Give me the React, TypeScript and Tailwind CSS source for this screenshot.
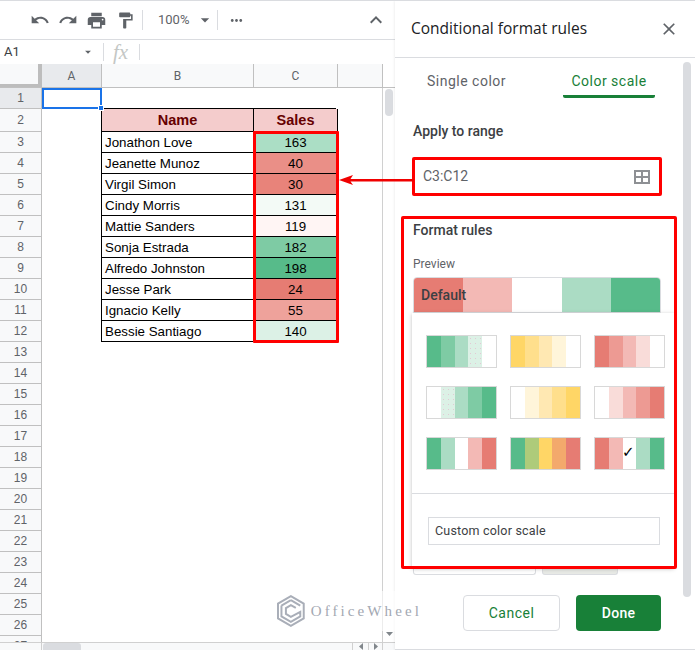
import { MdUndo, MdRedo, MdPrint, MdFormatPaint, MdMoreHoriz, MdExpandLess, MdClose, MdArrowDropDown } from "react-icons/md";

const dots = "bg-[radial-gradient(#e3c9d4_0.4px,transparent_0.6px)] bg-[length:5px_5px]";
const cellDots = "bg-[radial-gradient(#cfe3d8_0.5px,transparent_0.7px)] bg-[length:4px_4px]";

const PEOPLE = [
  { name: "Jonathon Love", sales: 163, bg: "bg-[#abdec5]" },
  { name: "Jeanette Munoz", sales: 40, bg: "bg-[#ea8f87]" },
  { name: "Virgil Simon", sales: 30, bg: "bg-[#e8837a]" },
  { name: "Cindy Morris", sales: 131, bg: `bg-[#f3faf6] ${cellDots}` },
  { name: "Mattie Sanders", sales: 119, bg: "bg-[#fff5f4]" },
  { name: "Sonja Estrada", sales: 182, bg: "bg-[#7ecba4]" },
  { name: "Alfredo Johnston", sales: 198, bg: "bg-[#57bb8a]" },
  { name: "Jesse Park", sales: 24, bg: "bg-[#e67c73]" },
  { name: "Ignacio Kelly", sales: 55, bg: "bg-[#eea29b]" },
  { name: "Bessie Santiago", sales: 140, bg: "bg-[#dcf1e6]" },
];

const SCALES = [
  ["bg-[#57bb8a]", "bg-[#7ecba4]", "bg-[#abdcc4]", `bg-[#dcf1e6] ${dots}`, "bg-white"],
  ["bg-[#ffd666]", "bg-[#ffdf8c]", "bg-[#ffe8b2]", "bg-[#fff5da]", "bg-white"],
  ["bg-[#e67c73]", "bg-[#ed9a93]", "bg-[#f3b9b5]", "bg-[#f9dcd9]", "bg-white"],
  ["bg-white", `bg-[#dcf1e6] ${dots}`, "bg-[#abdcc4]", "bg-[#7ecba4]", "bg-[#57bb8a]"],
  ["bg-white", "bg-[#fff5da]", "bg-[#ffe8b2]", "bg-[#ffdf8c]", "bg-[#ffd666]"],
  ["bg-white", "bg-[#f9dcd9]", "bg-[#f3b9b5]", "bg-[#ed9a93]", "bg-[#e67c73]"],
  ["bg-[#57bb8a]", "bg-[#abdcc4]", "bg-white", "bg-[#f3b9b5]", "bg-[#e67c73]"],
  ["bg-[#57bb8a]", "bg-[#aecb7a]", "bg-[#ffd666]", "bg-[#f3a96c]", "bg-[#e67c73]"],
  ["bg-[#e67c73]", "bg-[#f3b9b5]", "bg-white", "bg-[#abdcc4]", "bg-[#57bb8a]"],
];

function RowHead({ n, active }: { n: number; active?: boolean }) {
  return (
    <div className={`w-[42px] shrink-0 flex items-center justify-center border-r border-b border-[#c0c0c0] text-[12px] text-[#5f6368] ${active ? "bg-[#e8eaed]" : "bg-[#f8f9fa]"}`}>
      {n}
    </div>
  );
}

function Sheet() {
  const blank = Array.from({ length: 15 }, (_, i) => i + 13);
  return (
    <div className="flex-1 flex flex-col min-h-0 relative">
      <div className="flex h-[24px] shrink-0 text-[12px] text-[#5f6368] bg-[#f8f9fa] border-b border-[#c0c0c0]">
        <div className="w-[42px] shrink-0 border-r-[4px] border-b-[3px] border-[#bdbdbd]" />
        <div className="w-[60px] shrink-0 flex items-center justify-center bg-[#e8eaed] border-r border-[#c0c0c0]">A</div>
        <div className="w-[152px] shrink-0 flex items-center justify-center border-r border-[#c0c0c0]">B</div>
        <div className="w-[84px] shrink-0 flex items-center justify-center border-r border-[#c0c0c0]">C</div>
        <div className="flex-1 border-r border-[#c0c0c0]" />
        <div className="w-[12px] shrink-0 bg-white" />
      </div>

      <div className="flex-1 flex min-h-0">
        <div className="flex-1 overflow-hidden border-r border-[#d0d0d0] font-['Liberation_Sans',sans-serif]">
          <div className="flex h-[21px]">
            <RowHead n={1} active />
            <div className="w-[60px] shrink-0 relative border-2 border-[#1a73e8] -mr-px">
              <div className="absolute -right-[4px] -bottom-[4px] w-[6px] h-[6px] bg-[#1a73e8] border border-white" />
            </div>
            <div className="w-[151px] shrink-0 border-b border-black" />
            <div className="w-[84px] shrink-0 border-b border-black" />
          </div>

          <div className="flex h-[23px]">
            <RowHead n={2} />
            <div className="w-[59px] shrink-0" />
            <div className="w-[153px] shrink-0 flex items-center justify-center pt-[2px] bg-[#f4cccc] border-x border-b border-black text-[14.5px] font-bold text-[#660000]">Name</div>
            <div className="w-[84px] shrink-0 flex items-center justify-center pt-[2px] bg-[#f4cccc] border-r border-b border-black text-[14.5px] font-bold text-[#660000]">Sales</div>
          </div>

          {PEOPLE.map((p, i) => (
            <div key={p.name} className="flex h-[21px]">
              <RowHead n={i + 3} />
              <div className="w-[59px] shrink-0" />
              <div className="w-[153px] shrink-0 flex items-center pl-[3px] pt-[2px] bg-white border-x border-b border-black text-[13.33px] text-black">{p.name}</div>
              <div className={`w-[84px] shrink-0 flex items-center justify-center pt-[2px] border-r border-b border-black text-[13.33px] text-black ${p.bg}`}>{p.sales}</div>
            </div>
          ))}

          {blank.map((n) => (
            <div key={n} className="flex h-[21px]">
              <RowHead n={n} />
            </div>
          ))}
        </div>

        <div className="w-[12px] shrink-0 relative">
          <div className="ml-[2px] mt-[1px] w-[8px] h-[27px] rounded-full bg-[#dadce0]" />
          <svg className="absolute bottom-[6px] left-[3px]" width="7" height="4" viewBox="0 0 7 4">
            <path d="M0 0h7L3.500 4z" fill="#80868b" />
          </svg>
        </div>
      </div>

      <div className="h-[8px] shrink-0 flex bg-[#f8f9fa] border-t border-[#d0d0d0]">
        <div className="w-[42px] shrink-0 border-r border-[#d0d0d0]" />
        <div className="ml-px w-[38px] h-[7px] rounded-t-[3px] bg-[#dadce0]" />
        <div className="ml-auto w-[16px] flex items-center justify-center border-l border-[#d0d0d0]">
          <svg width="4" height="7" viewBox="0 0 4 7"><path d="M4 0v7L0 3.500z" fill="#80868b" /></svg>
        </div>
        <div className="w-[15px] flex items-center justify-center border-x border-[#d0d0d0]">
          <svg width="4" height="7" viewBox="0 0 4 7"><path d="M0 0v7l4-3.500z" fill="#80868b" /></svg>
        </div>
        <div className="w-[12px]" />
      </div>
    </div>
  );
}

function Panel() {
  return (
    <div className="w-[300px] shrink-0 flex flex-col relative bg-white shadow-[-1px_0_2px_rgba(0,0,0,0.06)] font-['Roboto',sans-serif]">
      <div className="h-[57px] shrink-0 flex items-center justify-between pl-[16px] pr-[16px] border-b border-[#dadce0]">
        <span className="text-[15.5px] font-medium text-[#202124] font-['Open_Sans',sans-serif] -mt-[1px]">Conditional format rules</span>
        <MdClose className="text-[20px] text-[#5f6368]" />
      </div>

      <div className="flex-1 flex min-h-0">
        <div className="w-[288px] shrink-0 pl-[18px] pr-[22px]">
          <div className="flex h-[40px] text-[14px] tracking-[0.5px]">
            <div className="w-[150px] flex items-center pl-[14px] pt-[7px] text-[#5f6368]">Single color</div>
            <div className="w-[92px] flex items-center justify-center pt-[9px] text-[#188038] border-b-[3px] border-[#188038] rounded-b-[2px]">Color scale</div>
          </div>

          <div className="mt-[23px] text-[14px] font-medium text-[#3c4043]">Apply to range</div>

          <div className="mt-[15px] -ml-[1px] w-[250px] h-[39px] flex items-center justify-between pl-[8px] pr-[9px] border-[3px] border-[#ff0000] rounded-[2px]">
            <span className="text-[14px] text-[#5f6368]">C3:C12</span>
            <svg width="16" height="14" viewBox="0 0 16 14" className="text-[#8e9094]">
              <path fill="currentColor" d="M0 0h16v14H0zM2 2v4h5V2zM9 2v4h5V2zM2 8v4h5V8zM9 8v4h5V8z" fillRule="evenodd" />
            </svg>
          </div>

          <div className="mt-[24px] text-[14px] font-medium text-[#3c4043]">Format rules</div>
          <div className="mt-[14px] text-[12px] text-[#5f6368]">Preview</div>

          <div className="mt-[4px] w-[248px] h-[36px] flex rounded-t-[4px] overflow-hidden border border-[#dadce0] relative">
            <div className="flex-1 bg-[#e67c73]" />
            <div className="flex-1 bg-[#f3b9b5]" />
            <div className="flex-1 bg-white" />
            <div className="flex-1 bg-[#abdcc4]" />
            <div className="flex-1 bg-[#57bb8a]" />
            <span className="absolute left-[7px] top-[7px] text-[14px] font-medium text-[#3c4043]">Default</span>
          </div>

          <div className="mt-[254px] flex gap-[6px]">
            <div className="w-[123px] h-[8px] border border-t-0 border-[#dadce0] rounded-b-[3px]" />
            <div className="w-[76px] h-[8px] bg-[#e8eae6] border border-t-0 border-[#dadce0] rounded-b-[3px]" />
          </div>

          <div className="mt-[20px] flex justify-end gap-[16px]">
            <button className="w-[97px] h-[36px] flex items-center justify-center bg-white border border-[#dadce0] rounded-[4px] text-[14px] text-[#188038] tracking-[0.5px]">Cancel</button>
            <button className="w-[85px] h-[36px] flex items-center justify-center bg-[#188038] rounded-[4px] text-[14px] font-medium text-white tracking-[0.3px]">Done</button>
          </div>
        </div>

        <div className="w-[8px] h-[535px] mt-[4px] rounded-full bg-[#dadce0]" />
      </div>

      <div className="h-px shrink-0 bg-[#dadce0]" />

      {/* color scale menu, lies over the form */}
      <div className="absolute left-[17px] top-[312px] w-[262px] h-[255px] bg-white shadow-[0_1px_4px_rgba(0,0,0,0.25)]">
        <div className="grid grid-cols-3 gap-x-[13px] gap-y-[18px] pl-[14px] pt-[22px] w-[253px]">
          {SCALES.map((s, i) => (
            <div key={i} className="w-[71px] h-[33px] flex border border-[#d8d8d8] relative">
              {s.map((c, j) => (
                <div key={j} className={`flex-1 ${c}`} />
              ))}
              {i === 8 && <span className="absolute left-[27px] top-[3px] text-[15px] leading-[22px] text-black font-['DejaVu_Sans',sans-serif]">✓</span>}
            </div>
          ))}
        </div>
        <div className="mt-[23px] h-px bg-[#dadce0]" />
        <div className="mt-[23px] ml-[16px] w-[232px] h-[28px] flex items-center pl-[6px] border border-[#dadce0] text-[12.5px] text-[#3c4043] tracking-[0.2px]">
          Custom color scale
        </div>
      </div>

      {/* annotation box round the rules */}
      <div className="absolute left-[6px] top-[215px] w-[276px] h-[353px] border-[3px] border-[#ff0000] rounded-[2px] pointer-events-none" />
    </div>
  );
}

export default function App() {
  return (
    <div className="w-[695px] h-[650px] relative flex flex-col overflow-hidden bg-white border-t border-[#dadce0] font-['Roboto',sans-serif]">
      <div className="flex-1 flex min-h-0">
        <div className="w-[395px] shrink-0 flex flex-col">
          <div className="h-[39px] shrink-0 flex items-center pl-[30px] pr-[7px] text-[#5f6368] border-b border-[#dadce0]">
            <MdUndo className="text-[20px]" />
            <MdRedo className="text-[20px] ml-[8px]" />
            <MdPrint className="text-[21px] ml-[8px]" />
            <MdFormatPaint className="text-[19px] ml-[9px]" />
            <div className="w-px h-[20px] bg-[#dadce0] ml-[7px]" />
            <span className="text-[13px] ml-[15px]">100%</span>
            <MdArrowDropDown className="text-[20px] ml-[6px]" />
            <div className="w-px h-[20px] bg-[#dadce0] ml-[2px]" />
            <MdMoreHoriz className="text-[17px] ml-[10px]" />
            <MdExpandLess className="text-[24px] ml-auto" />
          </div>
          <div className="h-[24px] shrink-0 flex items-center text-[#3c4043]">
            <span className="w-[84px] pl-[4px] text-[13px]">A1</span>
            <MdArrowDropDown className="text-[14px] text-[#5f6368] -ml-[3px]" />
            <div className="w-px h-[18px] bg-[#dadce0] ml-[8px]" />
            <span className="ml-[9px] w-[26px] text-[21px] leading-[22px] italic text-[#c4c7c5] font-['Liberation_Serif',serif]">fx</span>
            <div className="w-px h-[16px] bg-[#dadce0]" />
          </div>
          <Sheet />
        </div>
        <Panel />
      </div>

      {/* annotations drawn on top of the screenshot */}
      <div className="absolute left-[253px] top-[130px] w-[86px] h-[212px] border-[3px] border-[#ff0000] rounded-[1px]" />
      <svg className="absolute left-[338px] top-[171px]" width="78" height="16" viewBox="0 0 78 16">
        <path d="M1 8l14-5-2.500 4H76v2.500H12.500l2.500 3.500z" fill="#f00000" />
      </svg>

      <div className="absolute left-[272px] top-[590px] w-[150px] h-[40px] flex items-center gap-[6px] bg-white/60 pl-[5px]">
        <svg width="28" height="32" viewBox="0 0 28 32" fill="none" stroke="#a9aeb8" strokeWidth="2">
          <path d="M14 1l13 7.500v15L14 31 1 23.500v-15z" />
          <path d="M14 5l9.500 5.500M4.500 10.500L14 5M4.500 10.500v11L14 27l9.500-5.500V17L14 22l-5-3v-6l5-3 5 2.800" />
        </svg>
        <span className="text-[15px] text-[#a3a8b2] tracking-[3.1px] font-['Liberation_Serif',serif]">OfficeWheel</span>
      </div>
    </div>
  );
}
